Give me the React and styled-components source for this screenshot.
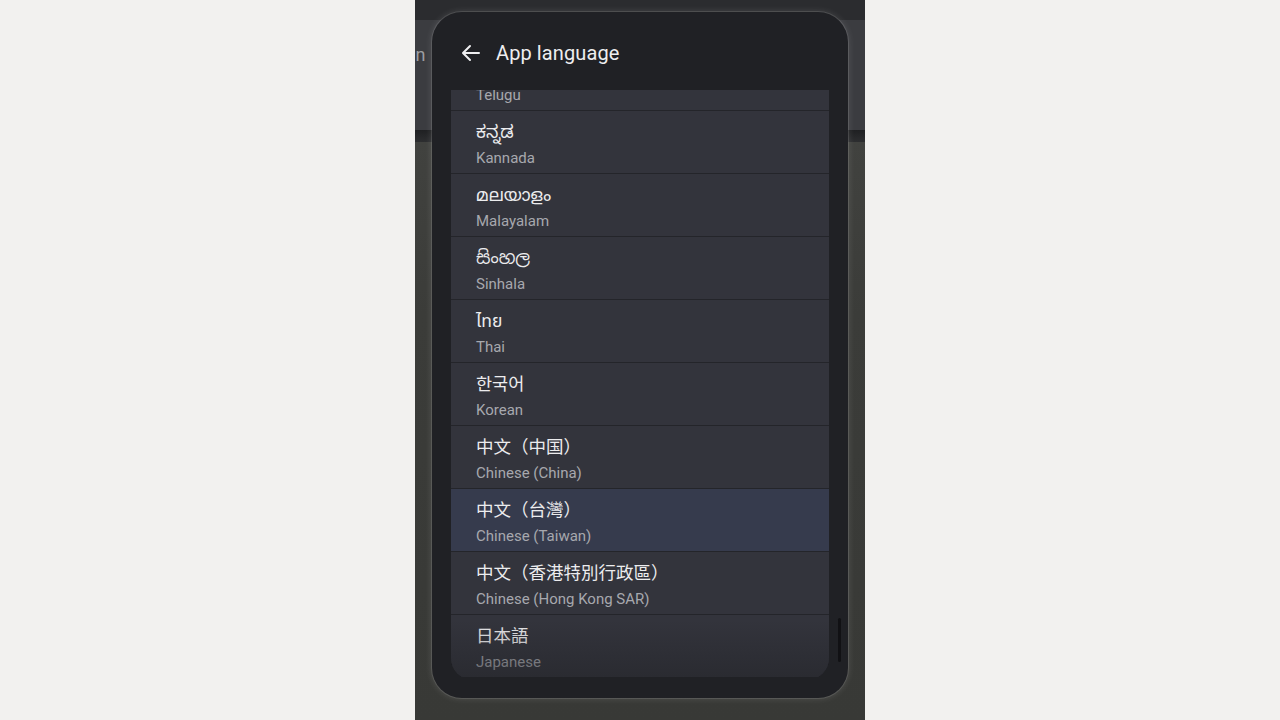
import React from "react";
import styled, { createGlobalStyle } from "styled-components";

const GlobalStyle = createGlobalStyle`
  html, body {
    margin: 0;
    padding: 0;
    background: #f2f1ef;
  }
  body {
    font-family: Roboto, "Noto Sans", "Noto Sans CJK TC", sans-serif;
  }
`;

const Stage = styled.div`
  display: flex;
  justify-content: center;
  width: 1280px;
  height: 720px;
  background: #f2f1ef;
`;

const Phone = styled.div`
  position: relative;
  width: 450px;
  height: 720px;
  display: flex;
  flex-direction: column;
  overflow: hidden;
  background: #393a37;
`;

const TopStrip = styled.div`
  height: 20px;
  background: #2b2c2f;
`;

const AppBar = styled.div`
  height: 110px;
  background: #3b3c40;
  display: flex;
  align-items: flex-start;
  padding-top: 24px;
  box-sizing: border-box;
  color: #9d9ea2;
  font-size: 18px;
`;

const AppBarText = styled.span`
  margin-left: -4px;
`;

const BarDivider = styled.div`
  height: 12px;
  background: linear-gradient(#1f2022, #2d2e30);
`;

const Rest = styled.div`
  flex: 1;
  background: linear-gradient(#41423f, #3b3c39 30%, #383936);
`;

const Dialog = styled.div`
  position: absolute;
  left: 17px;
  top: 12px;
  width: 416px;
  height: 686px;
  border-radius: 30px;
  background: #202125;
  box-shadow: 0 0 0 1px rgba(255, 255, 255, 0.1), 0 0 6px 1px rgba(255, 255, 255, 0.12);
  display: flex;
  flex-direction: column;
  overflow: hidden;
`;

const Header = styled.div`
  height: 78px;
  flex-shrink: 0;
  display: flex;
  align-items: center;
  padding-left: 27px;
  gap: 13px;
  box-sizing: border-box;
  padding-top: 4px;
`;

const Title = styled.h1`
  margin: 0;
  font-family: Roboto, "Noto Sans", sans-serif;
  font-weight: 400;
  font-size: 20px;
  line-height: 24px;
  color: #eeeef0;
  letter-spacing: 0.1px;
`;

const ListViewport = styled.div`
  position: relative;
  margin: 0 19px;
  height: 590px;
  overflow: hidden;
  border-radius: 0 0 22px 22px;
  &::after {
    content: "";
    position: absolute;
    left: 0;
    right: 0;
    bottom: 0;
    height: 60px;
    background: linear-gradient(rgba(32, 33, 37, 0), rgba(32, 33, 37, 0.5));
    pointer-events: none;
  }
`;

const Track = styled.div`
  display: flex;
  flex-direction: column;
  gap: 1px;
  background: #24252a;
  transform: translateY(-42px);
`;

const Row = styled.div`
  height: 62px;
  display: flex;
  flex-direction: column;
  justify-content: center;
  padding-left: 25px;
  padding-top: 3px;
  box-sizing: border-box;
  background: ${(p) => (p.$active ? "#363b4d" : "#33343c")};
`;

const Native = styled.div`
  font-family: Roboto, "Noto Sans", "Noto Sans Kannada", "Noto Sans Malayalam",
    "Noto Sans Sinhala", "Noto Sans Thai", "Noto Sans CJK TC", sans-serif;
  font-size: 17.5px;
  line-height: 24px;
  color: #ececee;
`;

const English = styled.div`
  font-family: Roboto, "Noto Sans", sans-serif;
  font-size: 15px;
  line-height: 20px;
  margin-top: 4px;
  color: #a7a8ae;
`;

const Scrollbar = styled.div`
  position: absolute;
  right: 7px;
  top: 606px;
  width: 3px;
  height: 44px;
  border-radius: 2px;
  background: #111114;
`;

const languages = [
  ["తెలుగు", "Telugu"],
  ["ಕನ್ನಡ", "Kannada"],
  ["മലയാളം", "Malayalam"],
  ["සිංහල", "Sinhala"],
  ["ไทย", "Thai"],
  ["한국어", "Korean"],
  ["中文（中国）", "Chinese (China)"],
  ["中文（台灣）", "Chinese (Taiwan)", true],
  ["中文（香港特別行政區）", "Chinese (Hong Kong SAR)"],
  ["日本語", "Japanese"],
];

function BackArrow() {
  return (
    <svg width="24" height="24" viewBox="0 0 24 24" fill="none">
      <path
        d="M20 12H4.5M11 5l-7 7 7 7"
        stroke="#eeeef0"
        strokeWidth="2"
        strokeLinecap="round"
        strokeLinejoin="round"
      />
    </svg>
  );
}

export default function App() {
  return (
    <Stage>
      <GlobalStyle />
      <Phone>
        <TopStrip />
        <AppBar>
          <AppBarText>in</AppBarText>
        </AppBar>
        <BarDivider />
        <Rest />
        <Dialog>
          <Header>
            <BackArrow />
            <Title>App language</Title>
          </Header>
          <ListViewport>
            <Track>
              {languages.map(([native, english, active]) => (
                <Row key={english} $active={active}>
                  <Native>{native}</Native>
                  <English>{english}</English>
                </Row>
              ))}
            </Track>
          </ListViewport>
          <Scrollbar />
        </Dialog>
      </Phone>
    </Stage>
  );
}
